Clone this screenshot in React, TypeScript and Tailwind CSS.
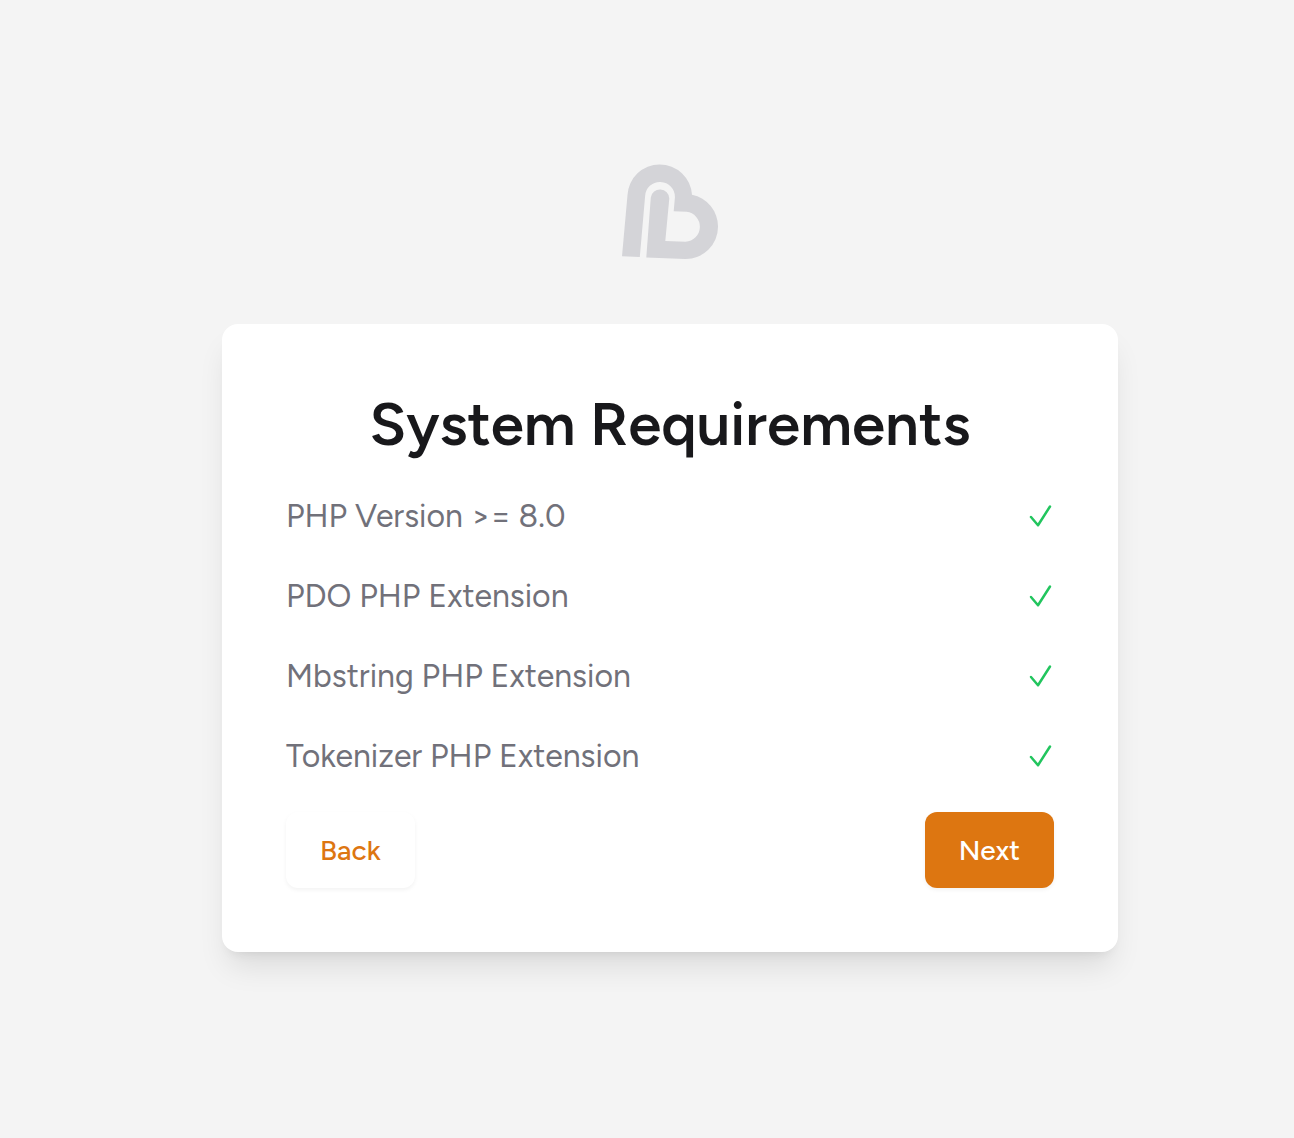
const requirements = [
  'PHP Version >= 8.0',
  'PDO PHP Extension',
  'Mbstring PHP Extension',
  'Tokenizer PHP Extension',
];

function Logo() {
  return (
    <svg viewBox="0 0 96 96" className="size-24 text-[#d4d4d8]" fill="currentColor" role="img" aria-label="Logo">
      <path d="M0 92.2 L5.5 31 A32.3 32.3 0 0 1 70 30.8 A32.4 32.4 0 0 1 96 62.7 A32.2 32.2 0 0 1 63 95 L24.3 93.4 L28.8 33.4 A9.3 9.3 0 0 1 47.3 34.5 L43.3 77 L63.5 77.7 A15 15 0 0 0 64.5 47.8 L51.7 47.2 L52.9 33.4 A14.9 14.9 0 0 0 23.1 32.2 L17.8 93 Z" />
    </svg>
  );
}

function CheckIcon() {
  return (
    <svg viewBox="0 0 28 32" className="h-8 w-7 text-[#22c55e]" fill="none" stroke="currentColor" strokeWidth="2.5" strokeLinecap="round" strokeLinejoin="round" role="img" aria-label="Passed">
      <path d="M5 17 L12 25.2 L24 6.5" />
    </svg>
  );
}

export default function App() {
  return (
    <main className="flex min-h-screen flex-col items-center justify-center gap-16 bg-[#f4f4f4] pb-[22px] pl-[46px] font-['Figtree','Lato',sans-serif] antialiased">
      <Logo />
      <section className="w-full max-w-4xl rounded-2xl bg-white p-16 shadow-[0_20px_30px_-6px_rgb(0_0_0/0.1),0_8px_12px_-8px_rgb(0_0_0/0.1)]">
        <h1 className="text-center text-[60px] leading-[72px] font-semibold text-[#18181b]">System Requirements</h1>
        <ul className="mt-4 text-[32px] leading-[48px] text-[#71717a]">
          {requirements.map((name) => (
            <li key={name} className="flex items-center justify-between py-4">
              <span>{name}</span>
              <CheckIcon />
            </li>
          ))}
        </ul>
        <div className="mt-4 flex justify-between text-[28px] leading-10 font-medium">
          <button type="button" className="rounded-xl border-2 border-transparent bg-white px-8 py-4 text-[#dd7611] shadow-[0_2px_4px_rgb(0_0_0/0.05)]">
            Back
          </button>
          <button type="button" className="rounded-xl border-2 border-transparent bg-[#dd7611] px-8 py-4 text-white shadow-[0_2px_4px_rgb(0_0_0/0.05)]">
            Next
          </button>
        </div>
      </section>
    </main>
  );
}
